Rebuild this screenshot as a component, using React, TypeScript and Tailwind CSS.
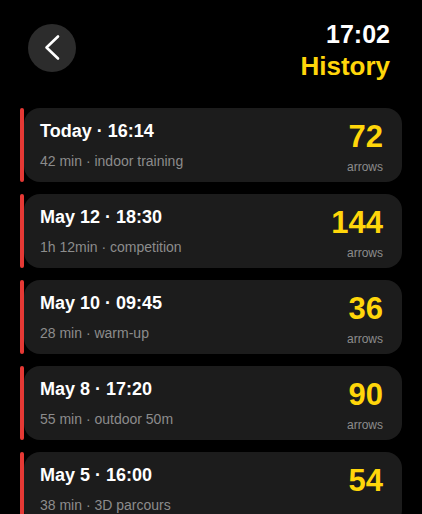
import React from "react";

interface Session {
  id: number;
  title: string;
  detail: string;
  arrows: number;
}

const sessions: Session[] = [
  { id: 1, title: "Today · 16:14", detail: "42 min · indoor training", arrows: 72 },
  { id: 2, title: "May 12 · 18:30", detail: "1h 12min · competition", arrows: 144 },
  { id: 3, title: "May 10 · 09:45", detail: "28 min · warm-up", arrows: 36 },
  { id: 4, title: "May 8 · 17:20", detail: "55 min · outdoor 50m", arrows: 90 },
  { id: 5, title: "May 5 · 16:00", detail: "38 min · 3D parcours", arrows: 54 },
];

function SessionCard({ session, showLabel }: { session: Session; showLabel: boolean }) {
  return (
    <div className="flex h-[74px]">
      <div className="w-1 rounded-full bg-[#e53935]" />
      <div className="flex flex-1 justify-between rounded-2xl bg-[#1c1c1c] pl-4 pr-[19px]">
        <div className="pt-3">
          <div className="text-[18px] font-bold leading-[22px] text-white">{session.title}</div>
          <div className="mt-[9px] text-[14px] leading-[20px] text-[#8c8c8c]">{session.detail}</div>
        </div>
        <div className="flex flex-col items-end pt-3">
          <div className="text-[31px] font-bold leading-[34px] text-[#ffd60a]">{session.arrows}</div>
          {showLabel && <div className="mt-[5px] text-[12px] leading-[16px] text-[#8c8c8c]">arrows</div>}
        </div>
      </div>
    </div>
  );
}

export default function App() {
  return (
    <div
      className="h-[514px] w-[422px] overflow-hidden bg-black"
      style={{ fontFamily: '"Liberation Sans", Arial, sans-serif' }}
    >
      <header className="flex items-start justify-between pl-7 pr-8 pt-[18px]">
        <button className="mt-[6px] flex h-12 w-12 items-center justify-center rounded-full bg-[#2c2c2c]">
          <svg width="48" height="48" viewBox="0 0 48 48" fill="none">
            <path
              d="M30 12.5 L18.5 23.5 L30 34.5"
              stroke="white"
              strokeWidth="2.6"
              strokeLinecap="round"
              strokeLinejoin="round"
            />
          </svg>
        </button>
        <div className="text-right font-bold leading-[32px]">
          <div className="text-[25px] text-white">17:02</div>
          <div className="text-[26px] text-[#ffd60a]">History</div>
        </div>
      </header>
      <div className="mt-[26px] flex flex-col gap-3 px-5">
        {sessions.map((s, i) => (
          <SessionCard key={s.id} session={s} showLabel={i < sessions.length - 1} />
        ))}
      </div>
    </div>
  );
}
